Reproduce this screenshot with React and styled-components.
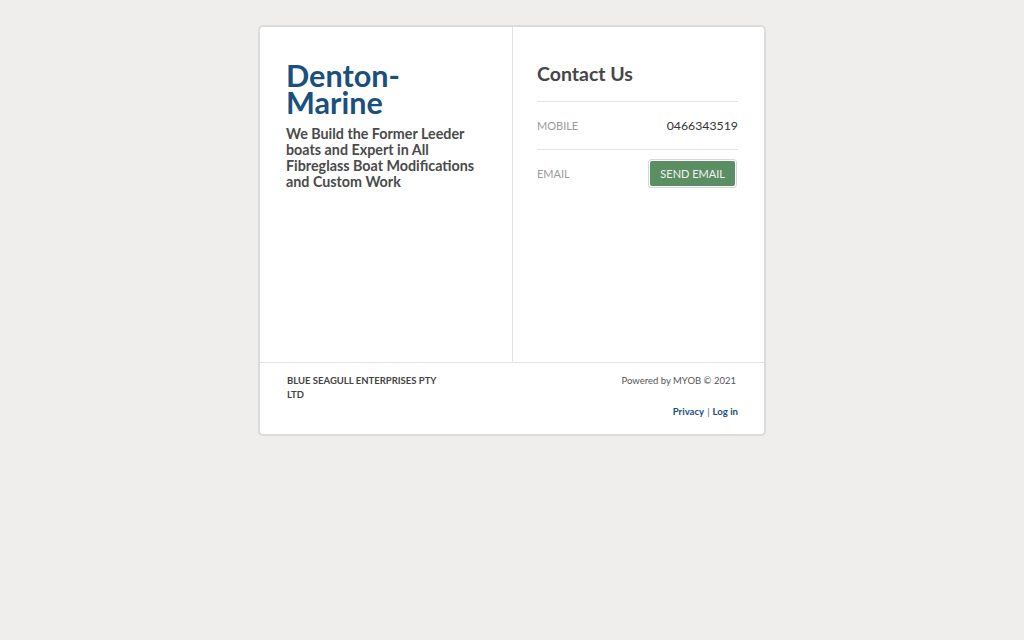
import React from 'react'
import styled, {createGlobalStyle} from 'styled-components'

const GlobalStyle = createGlobalStyle`
    body {
        margin: 0;
        background: #efeeec;
        font-family: Lato, "Open Sans", sans-serif;
    }
`

export default function App() {
    return (
        <>
            <GlobalStyle />
            <Card>
                <Main>
                    <Intro>
                        <Title>Denton-<br />Marine</Title>
                        <Tagline>We Build the Former Leeder boats and Expert in All Fibreglass Boat Modifications and Custom Work</Tagline>
                    </Intro>
                    <Contact>
                        <Heading>Contact Us</Heading>
                        <Row>
                            <Label>Mobile</Label>
                            <Value>0466343519</Value>
                        </Row>
                        <Row>
                            <Label>Email</Label>
                            <Button>Send Email</Button>
                        </Row>
                    </Contact>
                </Main>
                <Footer>
                    <Company>Blue Seagull Enterprises Pty Ltd</Company>
                    <Meta>
                        <Powered>Powered by MYOB © 2021</Powered>
                        <Links>
                            <Link href="#">Privacy</Link>
                            <Sep>|</Sep>
                            <Link href="#">Log in</Link>
                        </Links>
                    </Meta>
                </Footer>
            </Card>
        </>
    )
}

const Card = styled.div`
    width: 504px;
    margin: 25px auto 0;
    background: #fff;
    border: 2px solid #dcdbd9;
    border-radius: 5px;
    box-sizing: content-box;
`
const Main = styled.div`
    display: grid;
    grid-template-columns: 253px 1fr;
    height: 335px;
    border-bottom: 1px solid #e3e3e3;
`
const Intro = styled.div`
    padding: 35px 26px 0 26px;
    border-right: 1px solid #e3e3e3;
`
const Title = styled.h1`
    margin: 0 0 10px;
    font-size: 30.6px;
    line-height: 27px;
    font-weight: 700;
    color: #1b4f7c;
`
const Tagline = styled.p`
    margin: 0;
    font-size: 14.3px;
    line-height: 16px;
    font-weight: 700;
    color: #4a4a4a;
`
const Contact = styled.div`
    padding: 34px 26px 0 24px;
`
const Heading = styled.h2`
    margin: 0 0 14px;
    font-size: 19.5px;
    line-height: 26px;
    font-weight: 700;
    color: #474747;
`
const Row = styled.div`
    display: flex;
    align-items: center;
    justify-content: space-between;
    height: 47px;
    border-top: 1px solid #e3e3e3;
`
const Label = styled.span`
    font-size: 11px;
    text-transform: uppercase;
    color: #9a9a9a;
`
const Value = styled.span`
    font-size: 12.3px;
    color: #333;
`
const Button = styled.button`
    font-family: inherit;
    font-size: 11px;
    text-transform: uppercase;
    color: #f1f5f1;
    background: #5b8e63;
    border: none;
    border-radius: 2px;
    padding: 0 10px;
    height: 25px;
    margin-right: 3px;
    box-shadow: 0 0 0 1px #fff, 0 0 0 2px #d7d7d7;
`
const Footer = styled.div`
    display: flex;
    justify-content: space-between;
    padding: 11px 26px 15px 27px;
`
const Company = styled.div`
    width: 160px;
    font-size: 9.5px;
    line-height: 14px;
    font-weight: 700;
    text-transform: uppercase;
    color: #444;
`
const Meta = styled.div`
    display: flex;
    flex-direction: column;
    align-items: flex-end;
    gap: 17px;
`
const Powered = styled.div`
    font-size: 9.5px;
    line-height: 14px;
    color: #555;
    margin-right: 2px;
`
const Links = styled.div`
    display: flex;
    gap: 3px;
    font-size: 9.6px;
    line-height: 14px;
`
const Link = styled.a`
    font-weight: 700;
    color: #1b4f7c;
    text-decoration: none;
`
const Sep = styled.span`
    color: #666;
`
